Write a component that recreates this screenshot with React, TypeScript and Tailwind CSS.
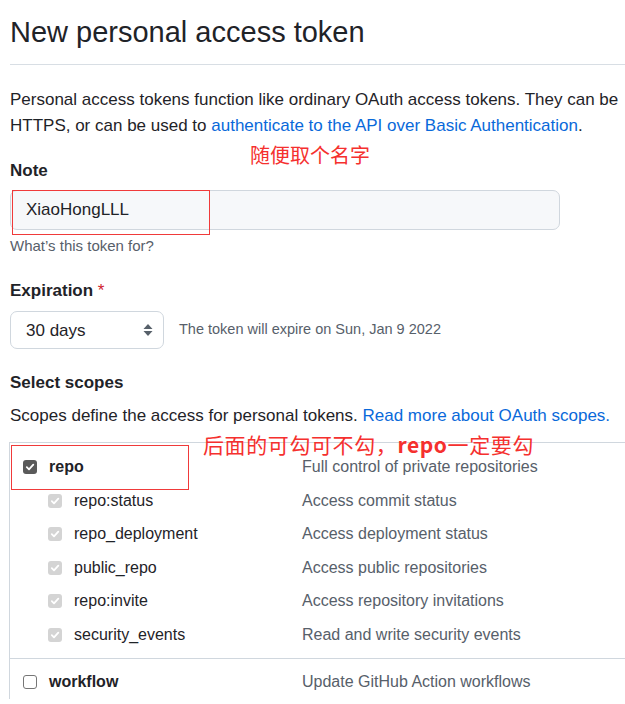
import React from 'react';

const SANS = "font-['Liberation_Sans','Noto_Sans_CJK_SC',sans-serif]";

type Scope = { name: string; desc: string };

const repoChildren: Scope[] = [
  { name: 'repo:status', desc: 'Access commit status' },
  { name: 'repo_deployment', desc: 'Access deployment status' },
  { name: 'public_repo', desc: 'Access public repositories' },
  { name: 'repo:invite', desc: 'Access repository invitations' },
  { name: 'security_events', desc: 'Read and write security events' },
];

const Check = ({ variant }: { variant: 'on' | 'disabled' | 'off' }) => {
  if (variant === 'off') {
    return <span className="block w-[14px] h-[14px] rounded-[3px] border border-[#767676] bg-white" />;
  }
  return (
    <span
      className={`flex items-center justify-center w-[14px] h-[14px] rounded-[3px] ${
        variant === 'on' ? 'bg-[#5a5a5a]' : 'bg-[#d4d4d4]'
      }`}
    >
      <svg className="w-[10px] h-[10px]" viewBox="0 0 10 10" fill="none">
        <path d="M1.8 5.2 L4 7.3 L8.3 2.6" stroke="white" strokeWidth={1.8} strokeLinecap="round" strokeLinejoin="round" />
      </svg>
    </span>
  );
};

export default function App() {
  return (
    <div className={`relative w-[625px] h-[704px] overflow-hidden bg-white text-[#1f2328] ${SANS}`}>
      {/* red annotations drawn over the page */}
      <div className="absolute left-[250px] top-[143px] text-[20px] leading-[24px] text-[#f5302e] font-['Noto_Sans_CJK_SC',sans-serif]">
        随便取个名字
      </div>
      <div className="absolute left-[12px] top-[190px] w-[198px] h-[45px] border border-[#f03a3a]" />
      <div className="absolute left-[203px] top-[433px] text-[21px] tracking-[0.6px] leading-[22px] text-[#f5302e] font-['Noto_Sans_CJK_SC',sans-serif]">
        后面的可勾可不勾，<span className="font-bold">repo</span>一定要勾
      </div>
      <div className="absolute left-[11px] top-[445px] w-[178px] h-[45px] border border-[#f03a3a]" />

      <div className="pl-[10px]">
        {/* Header */}
        <div className="h-[65px] border-b border-[#d8dee4] pt-[12px]">
          <h1 className="text-[29px] leading-[40px] font-normal">New personal access token</h1>
        </div>

        <p className="mt-[22px] text-[17px] leading-[26px] whitespace-nowrap">
          Personal access tokens function like ordinary OAuth access tokens. They can be
          <br />
          HTTPS, or can be used to <a className="text-[#0969da]">authenticate to the API over Basic Authentication</a>.
        </p>

        {/* Note */}
        <div className="mt-[20px] text-[17px] leading-[24px] font-semibold">Note</div>
        <div className="mt-[7px] w-[550px] h-[40px] rounded-[7px] border border-[#d0d7de] bg-[#f6f8fa] flex items-center pl-[15px] text-[17px]">
          XiaoHongLLL
        </div>
        <div className="mt-[6px] text-[15px] leading-[20px] text-[#57606a]">What’s this token for?</div>

        {/* Expiration */}
        <div className="mt-[23px] text-[17px] leading-[24px] font-semibold">
          Expiration <span className="text-[#cf222e] font-normal">*</span>
        </div>
        <div className="mt-[8px] flex items-center">
          <div className="w-[154px] h-[38px] rounded-[7px] border border-[#d0d7de] bg-white flex items-center justify-between pl-[15px] pr-[9px] text-[17px]">
            <span className="pt-[2px]">30 days</span>
            <svg className="w-[12px] h-[16px]" viewBox="0 0 12 16" fill="#57606a">
              <path d="M6 2 L10.5 7 H1.5 Z" />
              <path d="M6 14 L10.5 9 H1.5 Z" />
            </svg>
          </div>
          <span className="ml-[15px] text-[14.5px] text-[#57606a]">The token will expire on Sun, Jan 9 2022</span>
        </div>

        {/* Scopes */}
        <div className="mt-[22px] text-[17px] leading-[24px] font-semibold">Select scopes</div>
        <p className="mt-[9px] text-[17px] leading-[24px] whitespace-nowrap">
          Scopes define the access for personal tokens. <a className="text-[#0969da]">Read more about OAuth scopes.</a>
        </p>

        <div className="mt-[14px] -ml-[1px] border-l border-t border-[#d0d7de] text-[16px]">
          <div className="border-b border-[#d0d7de] pt-[7px] pb-[6px]">
            <div className="flex items-center h-[34px]">
              <div className="w-[292px] flex items-center pl-[13px]">
                <Check variant="on" />
                <span className="ml-[12px] font-semibold">repo</span>
              </div>
              <span className="text-[#57606a] leading-[18px]">Full control of private repositories</span>
            </div>
            {repoChildren.map((s) => (
              <div key={s.name} className="flex items-center h-[33.5px]">
                <div className="w-[292px] flex items-center pl-[38px]">
                  <Check variant="disabled" />
                  <span className="ml-[12px]">{s.name}</span>
                </div>
                <span className="text-[#57606a]">{s.desc}</span>
              </div>
            ))}
          </div>
          <div className="pt-[6px]">
            <div className="flex items-center h-[34px]">
              <div className="w-[292px] flex items-center pl-[13px]">
                <Check variant="off" />
                <span className="ml-[12px] font-semibold">workflow</span>
              </div>
              <span className="text-[#57606a]">Update GitHub Action workflows</span>
            </div>
          </div>
        </div>
      </div>
    </div>
  );
}
